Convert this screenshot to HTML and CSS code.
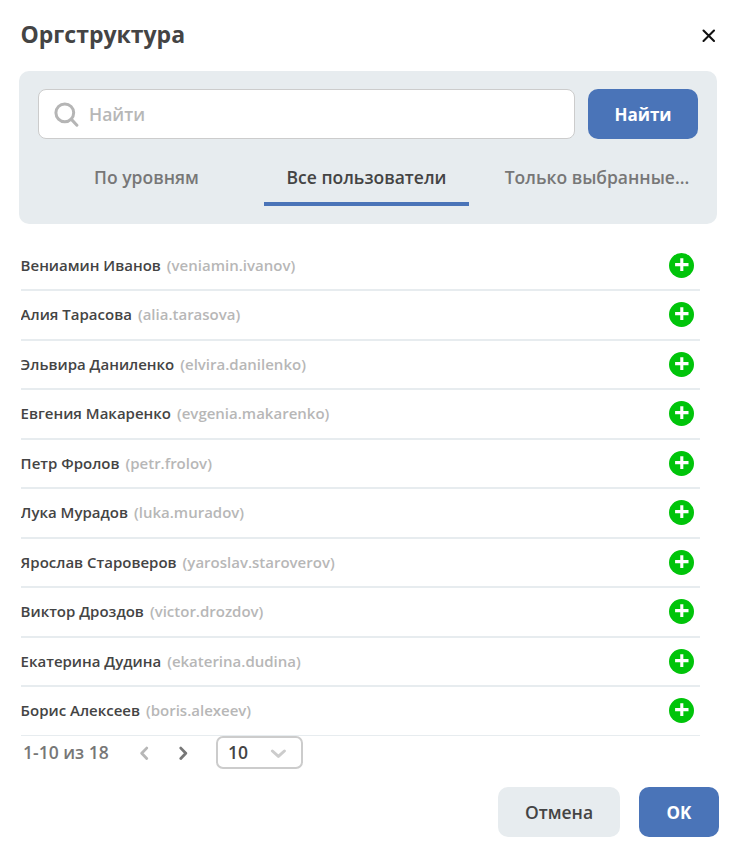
FILE: index.html
```html
<!DOCTYPE html>
<html lang="ru">
<head>
<meta charset="utf-8">
<title>Оргструктура</title>
<link rel="stylesheet" href="styles.css">
</head>
<body>
<main class="dialog">
  <header class="head">
    <h1 class="title">Оргструктура</h1>
    <svg class="close" viewBox="0 0 14 14"><path d="M1.5 1.5 12 12M12 1.5 1.5 12"/></svg>
  </header>
  <section class="panel">
    <div class="search">
      <div class="field">
        <svg class="lens" viewBox="0 0 26 26"><circle cx="10.8" cy="11.8" r="8.9"/><path d="M17.4 18.4 22.9 24.2"/></svg>
        <span class="placeholder">Найти</span>
      </div>
      <div class="btn primary find">Найти</div>
    </div>
    <nav class="tabs">
      <div class="tab">По уровням</div>
      <div class="tab active">Все пользователи</div>
      <div class="tab wide">Только выбранные...</div>
    </nav>
  </section>
  <ul class="list">
    <li class="row"><span class="name">Вениамин Иванов</span><span class="login">(veniamin.ivanov)</span><svg class="add" viewBox="0 0 25 25"><circle cx="12.5" cy="12.5" r="12.5"/><path d="M12.8 5.3v12.7M6.1 11.6h13.4"/></svg></li>
    <li class="row"><span class="name">Алия Тарасова</span><span class="login">(alia.tarasova)</span><svg class="add" viewBox="0 0 25 25"><circle cx="12.5" cy="12.5" r="12.5"/><path d="M12.8 5.3v12.7M6.1 11.6h13.4"/></svg></li>
    <li class="row"><span class="name">Эльвира Даниленко</span><span class="login">(elvira.danilenko)</span><svg class="add" viewBox="0 0 25 25"><circle cx="12.5" cy="12.5" r="12.5"/><path d="M12.8 5.3v12.7M6.1 11.6h13.4"/></svg></li>
    <li class="row"><span class="name">Евгения Макаренко</span><span class="login">(evgenia.makarenko)</span><svg class="add" viewBox="0 0 25 25"><circle cx="12.5" cy="12.5" r="12.5"/><path d="M12.8 5.3v12.7M6.1 11.6h13.4"/></svg></li>
    <li class="row"><span class="name">Петр Фролов</span><span class="login">(petr.frolov)</span><svg class="add" viewBox="0 0 25 25"><circle cx="12.5" cy="12.5" r="12.5"/><path d="M12.8 5.3v12.7M6.1 11.6h13.4"/></svg></li>
    <li class="row"><span class="name">Лука Мурадов</span><span class="login">(luka.muradov)</span><svg class="add" viewBox="0 0 25 25"><circle cx="12.5" cy="12.5" r="12.5"/><path d="M12.8 5.3v12.7M6.1 11.6h13.4"/></svg></li>
    <li class="row"><span class="name">Ярослав Староверов</span><span class="login">(yaroslav.staroverov)</span><svg class="add" viewBox="0 0 25 25"><circle cx="12.5" cy="12.5" r="12.5"/><path d="M12.8 5.3v12.7M6.1 11.6h13.4"/></svg></li>
    <li class="row"><span class="name">Виктор Дроздов</span><span class="login">(victor.drozdov)</span><svg class="add" viewBox="0 0 25 25"><circle cx="12.5" cy="12.5" r="12.5"/><path d="M12.8 5.3v12.7M6.1 11.6h13.4"/></svg></li>
    <li class="row"><span class="name">Екатерина Дудина</span><span class="login">(ekaterina.dudina)</span><svg class="add" viewBox="0 0 25 25"><circle cx="12.5" cy="12.5" r="12.5"/><path d="M12.8 5.3v12.7M6.1 11.6h13.4"/></svg></li>
    <li class="row"><span class="name">Борис Алексеев</span><span class="login">(boris.alexeev)</span><svg class="add" viewBox="0 0 25 25"><circle cx="12.5" cy="12.5" r="12.5"/><path d="M12.8 5.3v12.7M6.1 11.6h13.4"/></svg></li>
  </ul>
  <div class="pager">
    <span class="range">1-10 из 18</span>
    <svg class="arrow prev" viewBox="0 0 10 14"><path d="M7.7 2.1 2.7 7.3l5 5.2"/></svg>
    <svg class="arrow next" viewBox="0 0 10 14"><path d="M2.8 2.1 7.8 7.3l-5 5.2"/></svg>
    <div class="select"><span class="size">10</span><svg class="chevron" viewBox="0 0 16 10"><path d="M2.4 3l6 5.4L14.4 3"/></svg></div>
  </div>
  <footer class="actions">
    <div class="btn cancel">Отмена</div>
    <div class="btn primary ok">OK</div>
  </footer>
</main>
</body>
</html>
```
FILE: styles.css
```css
* { box-sizing: border-box; }
body {
  margin: 0;
  background: #fff;
  color: #444;
  font-family: "Open Sans", "Noto Sans", sans-serif;
  font-size: 17.5px;
  font-weight: 600;
}
svg { display: block; flex: none; fill: none; stroke-linecap: round; stroke-linejoin: round; }
.dialog { height: 853px; overflow: hidden; padding: 0 19px; }
.head { display: flex; justify-content: space-between; align-items: center; height: 71px; padding: 0 3px 0 1.5px; }
.title { margin: 0; padding-bottom: 3px; font-size: 23px; line-height: 32px; font-weight: 700; }
.close { width: 14px; height: 14px; stroke: #111; stroke-width: 2.1; }
.panel { width: 698px; height: 153px; padding: 18px 19px; border-radius: 10px; background: #e7ecef; }
.search { display: flex; gap: 13px; }
.field { display: flex; align-items: center; width: 537px; height: 50px; padding-left: 15px; border: 1px solid #ccc; border-radius: 8px; background: #fff; }
.lens { width: 26px; height: 26px; stroke: #b5b5b5; stroke-width: 3; }
.placeholder { margin-left: 9px; color: #b7b7b7; }
.btn { display: flex; align-items: center; justify-content: center; height: 50px; border-radius: 10px; white-space: nowrap; }
.primary { background: #4a74b8; color: #fff; font-size: 17px; font-weight: 700; }
.find { width: 110px; }
.tabs { display: flex; gap: 15px; margin-left: 6px; padding-top: 9px; }
.tab { flex: none; width: 205px; height: 58px; line-height: 58px; text-align: center; color: #777; white-space: nowrap; }
.tab.wide { width: 226px; }
.active { color: #444; background: linear-gradient(#4a74b8, #4a74b8) bottom / 100% 4px no-repeat; }
.list { width: 679px; height: 495px; margin: 17px 0 0 2px; padding: 0.5px 0 0; overflow: hidden; list-style: none; }
.row { display: flex; align-items: center; height: 49.5px; padding-right: 6px; border-bottom: 2px solid #e7ecef; font-size: 15px; line-height: 21px; white-space: nowrap; }
.name, .login { padding-bottom: 1px; }
.row:nth-child(odd) .name, .row:nth-child(odd) .login { padding: 1px 0 0; }
.name { margin-left: -0.4px; }
.login { margin-left: 6px; color: #b7b7b7; }
.add { width: 25px; height: 25px; margin-left: auto; fill: #00c40a; stroke: none; }
.add path { stroke: #fff; stroke-width: 3.1; stroke-linecap: butt; }
.pager { display: flex; align-items: center; height: 33px; padding-left: 4px; color: #777; }
.range { width: 116px; padding-bottom: 2px; }
.size { padding-bottom: 2px; }
.arrow { width: 10px; height: 14px; stroke-width: 2.8; }
.prev { stroke: #b7b7b7; }
.next { margin-left: 29px; stroke: #777; }
.select { display: flex; align-items: center; justify-content: space-between; width: 87px; height: 33px; margin-left: 28px; padding: 0 15px 0 10px; border: 2px solid #ccc; border-radius: 7px; color: #444; }
.chevron { width: 16px; height: 10px; stroke: #ccc; stroke-width: 3; }
.actions { display: flex; justify-content: flex-end; gap: 19px; margin-top: 18px; }
.cancel { width: 122px; background: #e7ecef; }
.ok { width: 80px; }
```
